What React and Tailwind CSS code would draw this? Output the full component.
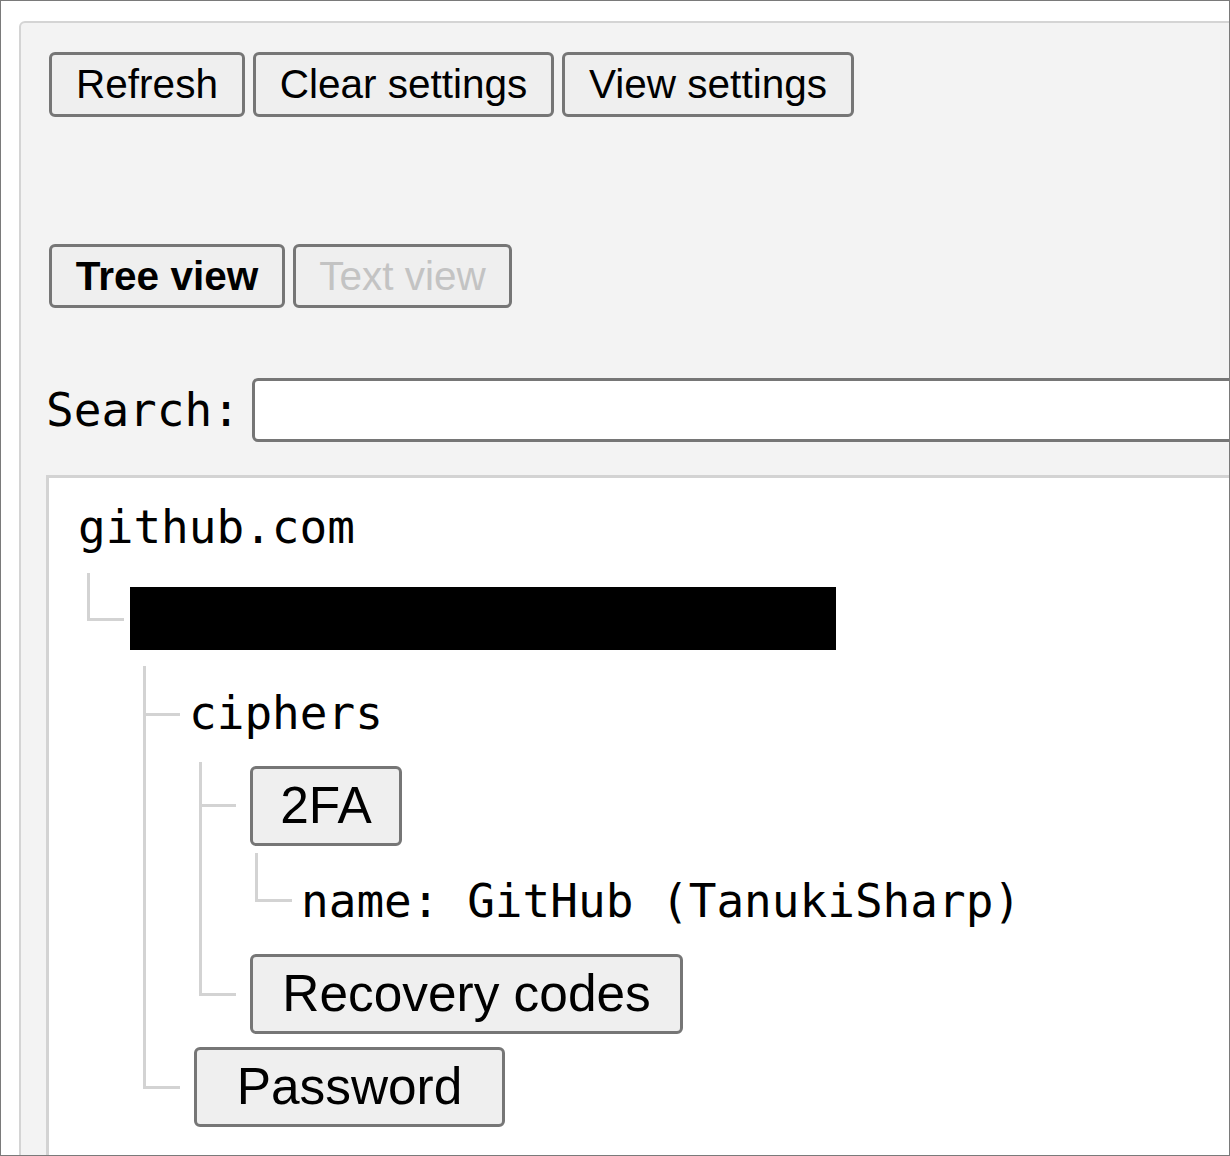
const sans = "font-['Liberation_Sans',Arial,sans-serif]"
const mono = "font-['DejaVu_Sans_Mono',monospace]"

function Btn({ className = '', children }) {
  return (
    <button
      className={`${sans} flex shrink-0 items-center justify-center rounded-[6px] border-[3px] border-[#767676] bg-[#efefef] leading-none text-black ${className}`}
    >
      {children}
    </button>
  )
}

// one child of a tree list: connector column + content
function Branch({ last, stub, top, children }) {
  return (
    <div className="flex">
      <div className="flex w-[37px] shrink-0 flex-col">
        <div className={`shrink-0 border-b-[3px] border-l-[3px] border-[#d3d3d3] ${stub}`} />
        {!last && <div className="flex-1 border-l-[3px] border-[#d3d3d3]" />}
      </div>
      <div className={`flex flex-col pl-[6px] ${top}`}>{children}</div>
    </div>
  )
}

function Label({ children }) {
  return <div className={`${mono} ml-[3px] h-[54px] whitespace-pre text-[46px] leading-[54px] text-black`}>{children}</div>
}

function NodeBtn({ className, children }) {
  return (
    <Btn className={`ml-[8px] h-[80px] text-[51.4px] ${className}`}>{children}</Btn>
  )
}

export default function App() {
  return (
    <div className="h-[1156px] w-[1230px] overflow-hidden border border-[#7a7a7a] bg-white">
      <div className="ml-[18px] mt-[20px] w-[1300px] rounded-tl-[6px] border-2 border-[#d4d4d4] bg-[#f3f3f3] pb-[60px] pl-[25px] pt-[29px]">
        <div className="ml-[3px] flex gap-2">
          <Btn className="h-[65px] w-[196px] text-[40.5px]">Refresh</Btn>
          <Btn className="h-[65px] w-[301px] text-[40.5px]">Clear settings</Btn>
          <Btn className="h-[65px] w-[292px] text-[40.5px]">View settings</Btn>
        </div>

        <div className="ml-[3px] mt-[127px] flex gap-2">
          <Btn className="h-[64px] w-[236px] text-[40.5px] font-bold">Tree view</Btn>
          <Btn className="h-[64px] w-[219px] text-[40.5px] !text-[#c3c3c3]">Text view</Btn>
        </div>

        <div className="mt-[70px] flex items-center">
          <label className={`${mono} w-[206px] shrink-0 text-[46px] leading-none text-black`}>Search:</label>
          <input className="h-[64px] flex-1 rounded-[6px] border-[3px] border-[#767676] bg-white outline-none" />
        </div>

        <div className="mt-[33px] border-[3px] border-[#d3d3d3] bg-white pb-[80px] pl-[26px] pt-[22px]">
          <Label>github.com</Label>
          <div className="ml-[12px] mt-[19px]">
            <Branch last stub="h-[48px]" top="pt-[14px]">
              <div className="h-[63px] w-[706px] bg-black" />
              <div className="ml-[13px] mt-[16px]">
                <Branch stub="h-[50px]" top="pt-[20px]">
                  <Label>ciphers</Label>
                  <div className="ml-[13px] mt-[22px]">
                    <Branch stub="h-[45px]" top="pt-[4px]">
                      <NodeBtn className="w-[152px]">2FA</NodeBtn>
                      <div className="ml-[13px] mt-[7px]">
                        <Branch last stub="h-[49px]" top="pt-[21px]">
                          <Label>name: GitHub (TanukiSharp)</Label>
                        </Branch>
                      </div>
                    </Branch>
                    <Branch last stub="h-[68px]" top="pt-[26px]">
                      <NodeBtn className="w-[433px]">Recovery codes</NodeBtn>
                    </Branch>
                  </div>
                </Branch>
                <Branch last stub="h-[55px]" top="pt-[13px]">
                  <NodeBtn className="w-[311px]">Password</NodeBtn>
                </Branch>
              </div>
            </Branch>
          </div>
        </div>
      </div>
    </div>
  )
}
